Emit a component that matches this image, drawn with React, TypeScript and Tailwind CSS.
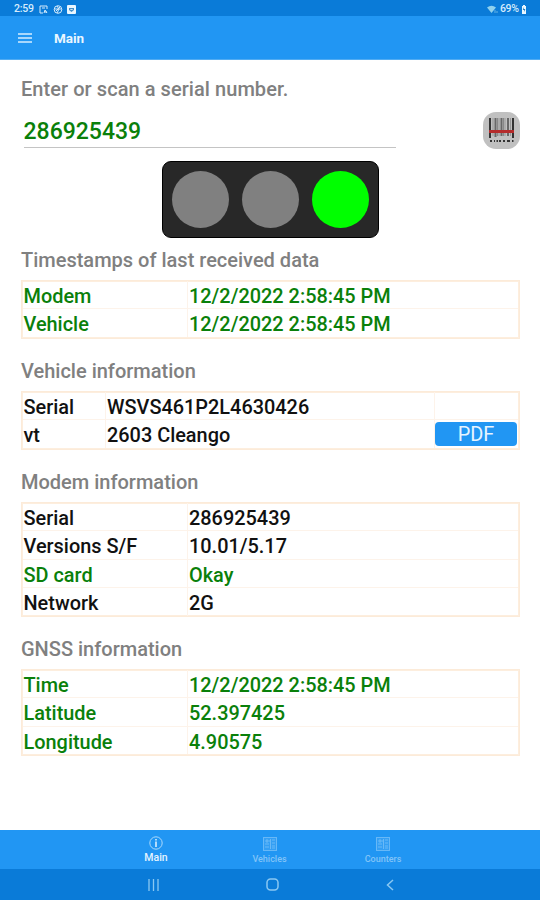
import React from 'react';

interface Row {
    label: string;
    value: string;
    ok?: boolean;
}

interface InfoSectionProps {
    title: string;
    rows: Row[];
}

const timestamps: Row[] = [
    { label: 'Modem', value: '12/2/2022 2:58:45 PM', ok: true },
    { label: 'Vehicle', value: '12/2/2022 2:58:45 PM', ok: true },
];

const modemInfo: Row[] = [
    { label: 'Serial', value: '286925439' },
    { label: 'Versions S/F', value: '10.01/5.17' },
    { label: 'SD card', value: 'Okay', ok: true },
    { label: 'Network', value: '2G' },
];

const gnssInfo: Row[] = [
    { label: 'Time', value: '12/2/2022 2:58:45 PM', ok: true },
    { label: 'Latitude', value: '52.397425', ok: true },
    { label: 'Longitude', value: '4.90575', ok: true },
];

const SectionTitle = ({ children }: { children: React.ReactNode }) => (
    <h2 className="flex h-[52px] items-center pt-[12px] text-[20px] font-medium text-[#808080]">{children}</h2>
);

// Outer frame is a 1px border plus an inset ring
const Table = ({ children, className }: { children: React.ReactNode; className: string }) => (
    <div
        className={`border border-[#fcebd9] px-px text-[19.9px] leading-[31px] font-medium text-[#111111] inset-ring-1 inset-ring-[#fdeede] ${className}`}
    >
        {children}
    </div>
);

const InfoSection: React.FC<InfoSectionProps> = ({ title, rows }) => (
    <section>
        <SectionTitle>{title}</SectionTitle>
        <Table className={rows.length === 2 ? 'h-[59px]' : rows.length === 3 ? 'h-[87px]' : 'h-[115px]'}>
            {rows.map(row => (
                <div
                    key={row.label}
                    className={`grid h-[28.4px] grid-cols-[165px_1fr] border-b border-[#fdf3ea] last:border-b-0 ${row.ok ? 'text-[#0a800a]' : ''}`}
                >
                    <span className="h-[27.4px] border-r border-[#fdf3ea] pl-[0.5px]">{row.label}</span>
                    <span className="h-[27.4px] pl-px">{row.value}</span>
                </div>
            ))}
        </Table>
    </section>
);

const StatusBar = () => (
    <div className="flex h-4 items-center justify-between bg-[#0a7bd8] pr-[13px] pl-[14px] text-[10.5px] font-medium text-[#d6ecfc]">
        <div className="flex items-center gap-[5px] pt-[2px]">
            <span className="w-5 tracking-[-0.2px]">2:59</span>
            <svg width="9" height="9" viewBox="0 0 9 9" fill="none" stroke="currentColor">
                <path d="M4 8H1V1h7v3M3 3h3M5 8l1-3 2 3M5.5 7H8" />
            </svg>
            <svg width="10" height="9" viewBox="0 0 10 9" fill="none" stroke="currentColor">
                <circle cx="5" cy="4.5" r="3.8" />
                <path d="M1.5 4h7M4 1l2 3-2 4M7 2L3 6" />
            </svg>
            <svg width="9" height="9" viewBox="0 0 9 9" className="-ml-px">
                <rect width="9" height="9" rx="1" fill="#e9f6ff" />
                <path d="M2 3h5v2L4.5 7 2 5z" fill="#438fc9" />
                <path d="M3.5 4l1 1 1-1" fill="none" stroke="#fff" />
            </svg>
        </div>
        <div className="flex items-center pt-[2px]">
            <svg width="11" height="9" viewBox="0 0 11 9" className="mr-[2px]">
                <path d="M0 2.5Q4.5-1 9 2.5L4.5 8z" fill="#8fd1ee" />
                <path d="M8 5v3M10 8V6" stroke="#65b4e5" />
            </svg>
            <span className="w-[21px] tracking-[-0.4px]">69%</span>
            <svg width="6" height="9" viewBox="0 0 6 9">
                <path d="M1 1h1V0h2v1h1v8H1z" fill="#e9f6ff" />
                <path d="M3 2L1.8 5H3v2l1.4-3H3z" fill="#287fbd" />
            </svg>
        </div>
    </div>
);

const AppBar = () => (
    <header className="flex h-11 items-center border-b border-[#52acf2] bg-[#2196f3] pl-[18px]">
        <svg width="14" height="10" viewBox="0 0 14 10" className="mt-px" stroke="#d5edff" strokeWidth="1.5">
            <path d="M0 1h14M0 5h14M0 9h14" />
        </svg>
        <h1 className="mt-[2px] ml-[22px] text-[13.5px] font-bold text-[#eaf6ff]">Main</h1>
    </header>
);

const ScanButton = () => (
    <button className="flex h-[37px] w-[37px] items-center justify-center rounded-[13px] bg-[#c0c0c0]" aria-label="Scan">
        <svg width="27" height="27" viewBox="0 0 27 27" fill="none">
            <path d="M2 1v20M25 1v20" stroke="#333" strokeWidth="2" />
            <path d="M5 1v18M11 1v18M17 1v18M22.5 1v18" stroke="#969696" />
            <path d="M7.5 1v19M13.5 1v18M20 1v18" stroke="#686868" strokeWidth="2" />
            <path d="M9.5 1v18M15.5 1v18" stroke="#888" />
            <path d="M1 14.5h25" stroke="#b52b2b" strokeWidth="3" />
            <path d="M2 24h2M6 24h1M8.5 24h1.5M11 24h2M15 24h2M19 24h3M24 24h1.5" stroke="#333" strokeWidth="2" />
        </svg>
    </button>
);

const TrafficLight = () => (
    <div className="mx-auto flex h-[77px] w-[217px] items-center justify-between rounded-[9px] border border-black bg-[#282828] px-[9px]">
        <span className="h-[57px] w-[57px] rounded-full bg-[#808080]" />
        <span className="h-[57px] w-[57px] rounded-full bg-[#808080]" />
        <span className="h-[57px] w-[57px] rounded-full bg-[#00ff00]" />
    </div>
);

const VehicleSection = () => (
    <section>
        <SectionTitle>Vehicle information</SectionTitle>
        <Table className="h-[59px]">
            <div className="grid h-[28.4px] grid-cols-[83px_329px_1fr] border-b border-[#fdf3ea]">
                <span className="h-[27.4px] border-r border-[#fdf3ea] pl-[0.5px]">Serial</span>
                <span className="h-[27.4px] border-r border-[#fdf3ea] pl-px">WSVS461P2L4630426</span>
                <span />
            </div>
            <div className="grid h-[28.4px] grid-cols-[83px_329px_1fr]">
                <span className="h-[27.4px] border-r border-[#fdf3ea] pl-[0.5px]">vt</span>
                <span className="h-[27.4px] border-r border-[#fdf3ea] pl-px">2603 Cleango</span>
                <button className="mt-[2px] h-6 w-[82px] rounded-[4px] bg-[#2196f3] text-center leading-[25px] font-normal text-[#e6f4ff]">
                    PDF
                </button>
            </div>
        </Table>
    </section>
);

const ReportIcon = () => (
    <svg width="14" height="14" viewBox="0 0 14 14" fill="none" stroke="currentColor" strokeOpacity="0.7">
        <rect x="0.5" y="0.5" width="13" height="13" fill="currentColor" fillOpacity="0.2" />
        <path d="M2 4h5M2 7h4M2 10h4M4 2v4M9 3h3M9 6h3M9 9h3M9 11h3M7.5 2v10" />
    </svg>
);

const BottomTabs = () => (
    <nav className="flex h-[39px] justify-center bg-[#2196f3] pt-[6px] pr-[1px] text-[9px] text-[#82c4f8]">
        <div className="flex w-[113.5px] flex-col items-center text-[#e4f4ff]">
            <svg width="14" height="14" viewBox="0 0 14 14" fill="none" stroke="#acd9fb">
                <circle cx="7" cy="7" r="6.2" />
                <path d="M7 3v1.5M7 5.5V11" stroke="#e4f4ff" strokeWidth="1.5" />
            </svg>
            <span className="mt-[2px] text-[10.5px] leading-3 font-medium">Main</span>
        </div>
        <div className="flex w-[113.5px] flex-col items-center pt-px">
            <ReportIcon />
            <span className="mt-[2px] leading-3 font-medium">Vehicles</span>
        </div>
        <div className="flex w-[113.5px] flex-col items-center pt-px">
            <ReportIcon />
            <span className="mt-[2px] leading-3 font-medium">Counters</span>
        </div>
    </nav>
);

const SystemNav = () => (
    <div className="flex h-[31px] items-center justify-between bg-[#0a7bd8] pr-[146px] pl-[148px] text-[#8ac8f2]">
        <svg width="11" height="12" viewBox="0 0 11 12" stroke="currentColor" strokeWidth="1.3">
            <path d="M1 0v12M5.5 0v12M10 0v12" />
        </svg>
        <svg width="13" height="13" viewBox="0 0 13 13" className="mr-px" fill="none" stroke="currentColor" strokeWidth="1.5">
            <rect x="1" y="1" width="11" height="11" rx="3.5" />
        </svg>
        <svg width="8" height="12" viewBox="0 0 8 12" fill="none" stroke="currentColor" strokeWidth="1.5">
            <path d="M7 1L1.5 6 7 11" />
        </svg>
    </div>
);

export default function App() {
    return (
        <div className="flex h-[900px] w-[540px] flex-col bg-white font-[Roboto,sans-serif]">
            <StatusBar />
            <AppBar />
            <main className="flex-1 pr-5 pl-[21px]">
                <p className="pt-[17px] text-[20px] leading-6 font-medium tracking-[0.06px] text-[#808080]">
                    Enter or scan a serial number.
                </p>
                <div className="mt-[11px] flex h-[38px] items-start justify-between">
                    <div className="ml-[2.5px] h-9 w-[372.5px] border-b border-[#c4c4c4] text-[23px] leading-[40px] font-medium text-[#0a800a]">
                        286925439
                    </div>
                    <ScanButton />
                </div>
                <div className="mt-[11px] mb-[-10px]">
                    <TrafficLight />
                </div>
                <InfoSection title="Timestamps of last received data" rows={timestamps} />
                <VehicleSection />
                <InfoSection title="Modem information" rows={modemInfo} />
                <InfoSection title="GNSS information" rows={gnssInfo} />
            </main>
            <BottomTabs />
            <SystemNav />
        </div>
    );
}
